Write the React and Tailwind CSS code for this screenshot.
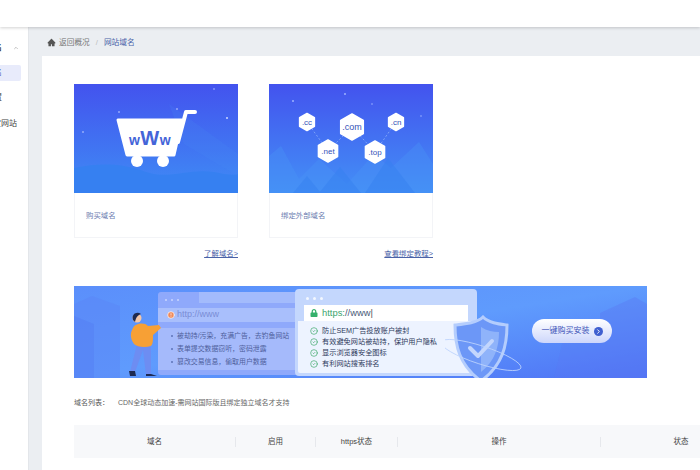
import React from "react";
import { CircleCheck, ChevronUp, ChevronRight, AlertCircle } from "lucide-react";
import { AiFillHome } from "react-icons/ai";
import { FaLock } from "react-icons/fa";

const CJK = "font-['Liberation_Sans','Noto_Sans_CJK_SC',sans-serif]";

function CartArt() {
  return (
    <svg viewBox="0 0 164 109" className="block h-[109px] w-[164px]">
      <defs>
        <linearGradient id="sky1" x1="0" y1="0" x2="0" y2="1">
          <stop offset="0" stopColor="#4353ee" />
          <stop offset="1" stopColor="#3f8cf5" />
        </linearGradient>
      </defs>
      <rect width="164" height="109" fill="url(#sky1)" />
      <path d="M0 84 C30 78 50 80 72 88 C95 96 115 84 140 88 C150 90 158 92 164 90 V109 H0 Z" fill="#3680f1" />
      <path d="M95 20 L164 70 V92 L110 60 Z" fill="#4a8af3" opacity="0.18" />
      <circle cx="45" cy="28" r="0.8" fill="#cdd8ff" />
      <circle cx="103" cy="25" r="0.8" fill="#cdd8ff" />
      <circle cx="153" cy="34" r="1" fill="#cdd8ff" />
      <circle cx="9" cy="48" r="0.8" fill="#cdd8ff" />
      <circle cx="140" cy="5" r="0.7" fill="#cdd8ff" />
      <path d="M44 36 H108 L100 71 H53 Z" fill="#fff" stroke="#fff" strokeWidth="3" strokeLinejoin="round" />
      <path d="M104 58 L112 28 H121" fill="none" stroke="#fff" strokeWidth="4" strokeLinecap="round" strokeLinejoin="round" />
      <circle cx="63" cy="77" r="6" fill="#fff" />
      <circle cx="89" cy="77" r="6" fill="#fff" />
      <text x="76" y="61" textAnchor="middle" fill="#4464d8" fontFamily="Liberation Sans, sans-serif" fontWeight="700" letterSpacing="0.5">
        <tspan fontSize="14">w</tspan>
        <tspan fontSize="20">W</tspan>
        <tspan fontSize="14">w</tspan>
      </text>
    </svg>
  );
}

function Hex({ x, y, r, label, size }) {
  const h = r * 0.87;
  const pts = `${x},${y - r} ${x + h},${y - r / 2} ${x + h},${y + r / 2} ${x},${y + r} ${x - h},${y + r / 2} ${x - h},${y - r / 2}`;
  return (
    <g>
      <polygon points={pts} fill="#fff" stroke="#fff" strokeWidth="1.5" strokeLinejoin="round" />
      <text x={x} y={y + size * 0.35} textAnchor="middle" fontSize={size} fill="#3552b8" fontFamily="Liberation Sans, sans-serif">
        {label}
      </text>
    </g>
  );
}

function HexArt() {
  return (
    <svg viewBox="0 0 164 109" className="block h-[109px] w-[164px]">
      <defs>
        <linearGradient id="sky2" x1="0" y1="0" x2="0" y2="1">
          <stop offset="0" stopColor="#4353ee" />
          <stop offset="1" stopColor="#4390f6" />
        </linearGradient>
      </defs>
      <rect width="164" height="109" fill="url(#sky2)" />
      <path d="M0 109 V72 L12 62 L30 95 L50 75 L78 100 L105 70 L122 84 L150 58 L164 80 V109 Z" fill="#4a94f6" opacity="0.35" />
      <path d="M24 109 L38 92 L52 109 Z M50 109 L71 83 L92 109 Z M96 109 L119 74 L146 109 Z" fill="#3580f0" opacity="0.5" />
      <path d="M38 38 L59 67 M83 43 L59 67 M83 43 L106 68 M127 38 L106 68" stroke="#7ea3f8" strokeWidth="1" strokeDasharray="2 2" />
      <circle cx="24" cy="17" r="1" fill="#9db2ff" />
      <circle cx="76" cy="10" r="1" fill="#9db2ff" />
      <circle cx="103" cy="20" r="0.8" fill="#9db2ff" />
      <circle cx="152" cy="32" r="0.8" fill="#9db2ff" />
      <Hex x={38} y={38} r={8.5} label=".cc" size={8} />
      <Hex x={83} y={43} r={13} label=".com" size={9} />
      <Hex x={127} y={38} r={8.5} label=".cn" size={8} />
      <Hex x={59} y={67} r={11} label=".net" size={8} />
      <Hex x={106} y={68} r={11} label=".top" size={8} />
    </svg>
  );
}

function Card({ art, label, link }) {
  return (
    <div className="w-[164px]">
      <div className="border-x border-b border-[#f3f4f7]">
        <div className="-mx-px">{art}</div>
        <div className="flex h-[44px] items-center pl-[11px] pt-[2px] text-[7.4px] text-[#6b7cb0]">{label}</div>
      </div>
      <div className="mt-[11px] text-right text-[7.4px] leading-[10px] text-[#4a62a8] underline">{link}</div>
    </div>
  );
}

function Person() {
  return (
    <svg viewBox="0 0 50 66" className="absolute left-[39px] top-[24px] h-[66px] w-[50px]">
      <path d="M24 34 L17 62 H22 L30 40 L33 65 H38 L38 33 Z" fill="#6d8df2" />
      <path d="M16 61 L22 61 L23 66 H17 Z M33 64 L38 64 L44 66 H33 Z" fill="#1e2a52" />
      <path d="M20 18 C22 13 32 12 35 16 L46 15 L48 18 L40 25 C40 30 40 34 38 36 C32 38 24 37 21 34 C17 28 17 23 20 18 Z" fill="#f7a035" />
      <circle cx="24" cy="8" r="4.5" fill="#f5c7a8" />
      <path d="M20 10 C18 4 24 1 28 4 C25 5 23 7 22 12 Z" fill="#1e2a52" />
    </svg>
  );
}

function BadBanner() {
  const rows = ["被劫持/污染，充满广告，去钓鱼网站", "表单提交数据窃听，密码泄露", "篡改交易信息，偷取用户数据"];
  return (
    <div className="absolute left-[84px] top-[6px] flex h-[83px] w-[145px] flex-col rounded-[3px] bg-[#8fa9fb]">
      <div className="flex h-[16px] items-center gap-[4px] pl-[7px]">
        <i className="h-[2px] w-[2px] rounded-full bg-[#c9d6ff]" />
        <i className="h-[2px] w-[2px] rounded-full bg-[#c9d6ff]" />
        <i className="h-[2px] w-[2px] rounded-full bg-[#c9d6ff]" />
        <div className="ml-[16px] mb-[5px] h-[11px] flex-1 self-start bg-[#a3bbfc]" />
      </div>
      <div className="flex h-[14px] items-center gap-[2px] bg-[#a9bffc] pl-[9px] text-[9px] text-[#7a8dd6]">
        <AlertCircle size={8} fill="#f08a5a" stroke="#fff" strokeWidth={2} />
        http://www
      </div>
      <div className="mt-[6px] flex flex-col gap-[3px] bg-[#a5bafb] py-[3px] pl-[13px]">
        {rows.map((r) => (
          <div key={r} className="flex h-[10px] items-center gap-[4px] text-[6.9px] whitespace-nowrap text-[#4e5f9c]">
            <i className="h-[2px] w-[2px] rounded-full bg-[#5e73b8]" />
            {r}
          </div>
        ))}
      </div>
    </div>
  );
}

function GoodBanner() {
  const rows = ["防止SEM广告投放账户被封", "有效避免网站被劫持，保护用户隐私", "显示浏览器安全图标", "有利网站搜索排名"];
  return (
    <div className="absolute left-[221px] top-[3px] flex h-[87px] w-[182px] flex-col rounded-[4px] bg-[#c4d7fd] p-[3px]">
      <div className="flex h-[13px] items-center gap-[4px] pl-[8px]">
        <i className="h-[3px] w-[3px] rounded-full bg-white/80" />
        <i className="h-[3px] w-[3px] rounded-full bg-white/80" />
        <i className="h-[3px] w-[3px] rounded-full bg-white/80" />
      </div>
      <div className="mx-[6px] flex h-[16px] shrink-0 items-center gap-[4px] bg-white pl-[6px] text-[9.4px] text-[#4a5a78]">
        <FaLock size={8} color="#35b06c" />
        <span><span className="text-[#3aa56c]">https:</span>//www<span className="text-[#555]">|</span></span>
      </div>
      <div className="flex flex-1 flex-col justify-start gap-px rounded-b-[2px] bg-[#edf3ff] pl-[12px] pt-[5px]">
        {rows.map((r) => (
          <div key={r} className="flex h-[10px] items-center gap-[4px] text-[7.2px] whitespace-nowrap text-[#2d3a5c]">
            <CircleCheck size={8} stroke="#3aa866" strokeWidth={2} />
            {r}
          </div>
        ))}
      </div>
    </div>
  );
}

function Shield() {
  return (
    <svg viewBox="0 0 80 70" className="absolute left-[371px] top-[29px] h-[70px] w-[80px]">
      <path d="M38 2 C44 8 54 9 62 10 C62 30 58 50 36 66 C14 50 10 30 10 10 C20 9 32 8 38 2 Z" fill="#6c97f7" stroke="#b4cdfd" strokeWidth="3" />
      <path d="M36 12 C42 16 48 17 54 17 C54 32 50 46 36 57 Z" fill="#8fb3fa" />
      <path d="M25 33 L33 41 L47 26" fill="none" stroke="#c3d6fd" strokeWidth="4" strokeLinecap="round" strokeLinejoin="round" />
      <ellipse cx="36" cy="40" rx="42" ry="9" transform="rotate(18 36 40)" fill="none" stroke="#bcd3fd" strokeWidth="0.8" />
    </svg>
  );
}

function Blocks() {
  return (
    <svg viewBox="0 0 573 92" className="absolute inset-0 h-[92px] w-[573px]">
      <path d="M0 18 L18 10 L46 20 V92 H0 Z" fill="#5a84f6" opacity="0.45" />
      <path d="M0 30 L20 38 V92 H0 Z" fill="#5078f2" opacity="0.35" />
      <path d="M526 27 L561 11 L573 18 V92 H526 Z" fill="#5a78f3" opacity="0.4" />
      <path d="M490 50 L526 40 V92 H480 Z" fill="#5a78f3" opacity="0.25" />
    </svg>
  );
}

function Banner() {
  return (
    <div className="relative h-[92px] w-[573px] overflow-hidden bg-gradient-to-br from-[#5b8ffb] via-[#5f9bfd] to-[#4f73f5]">
      <Blocks />
      <BadBanner />
      <Person />
      <GoodBanner />
      <Shield />
      <div className="absolute left-[458px] top-[33px] flex h-[24px] w-[80px] items-center justify-center gap-[4px] rounded-full bg-gradient-to-b from-white to-[#cdd6fb] text-[8px] whitespace-nowrap text-[#3e54b8]">
        一键购买安装
        <span className="flex h-[9px] w-[9px] items-center justify-center rounded-full bg-[#3f5fd0]">
          <ChevronRight size={7} stroke="#fff" strokeWidth={3} />
        </span>
      </div>
    </div>
  );
}

function Sidebar() {
  return (
    <aside className="flex w-[29px] shrink-0 flex-col overflow-hidden border-r border-[#e3e6ea] bg-white text-[8px] text-[#444]">
      <div className="mt-[13px] flex h-[16px] items-center">
        <span className="-ml-[6px] font-semibold">名</span>
        <ChevronUp size={6} className="ml-[11px] text-[#888]" />
      </div>
      <div className="mt-[9px] flex h-[16px] w-[21px] items-center rounded-r-[2px] bg-[#e8ebfb] text-[#5a6fc0]">
        <span className="-ml-[6px]">名</span>
      </div>
      <div className="mt-[9px] flex h-[16px] items-center">
        <span className="-ml-[6px]">置</span>
      </div>
      <div className="mt-[10px] flex h-[16px] items-center">
        <span className="-ml-[7px]">定网站</span>
      </div>
    </aside>
  );
}

export default function App() {
  const cols = [
    ["域名", "w-[162px]"],
    ["启用", "w-[80px]"],
    ["https状态", "w-[82px]"],
    ["操作", "w-[203px]"],
    ["状态", "w-[160px]"],
  ];
  return (
    <div className={`flex h-[470px] w-[700px] flex-col overflow-hidden bg-white ${CJK}`}>
      {/* Top bar */}
      <div className="relative z-10 h-[27px] shrink-0 bg-white shadow-[0_1px_3px_rgba(0,0,0,0.18)]" />
      <div className="flex min-h-0 flex-1">
        <Sidebar />
        <main className="flex min-w-0 flex-1 flex-col bg-[#ebeef2]">
          {/* Breadcrumb */}
          <div className="flex h-[29px] shrink-0 items-center pl-[18px] pt-[2px] text-[7.7px] text-[#777]">
            <AiFillHome size={9} color="#555" />
            <span className="ml-[3px]">返回概况</span>
            <span className="mx-[6px] text-[#bbb]">/</span>
            <span className="text-[#4a62a8]">网站域名</span>
          </div>
          {/* Content */}
          <div className="ml-[13px] flex-1 overflow-hidden bg-white pl-[32px] pt-[28px]">
            <div className="flex gap-[31px]">
              <Card art={<CartArt />} label="购买域名" link="了解域名>" />
              <Card art={<HexArt />} label="绑定外部域名" link="查看绑定教程>" />
            </div>
            <div className="mt-[27px]">
              <Banner />
            </div>
            <div className="mt-[20px] flex h-[10px] items-center text-[7px] text-[#666]">
              <span className="w-[44px] text-[#555]">域名列表：</span>
              <span>CDN全球动态加速-需网站国际版且绑定独立域名才支持</span>
            </div>
            <div className="mt-[17px] flex h-[33px] w-[687px] items-center bg-[#f7f8fa] text-[7.5px] text-[#444]">
              {cols.map(([name, w], i) => (
                <div key={name} className={`flex h-[10px] items-center justify-center ${w} ${i < 4 ? "border-r border-[#e6e8ec]" : ""}`}>
                  {name}
                </div>
              ))}
            </div>
          </div>
        </main>
      </div>
    </div>
  );
}
